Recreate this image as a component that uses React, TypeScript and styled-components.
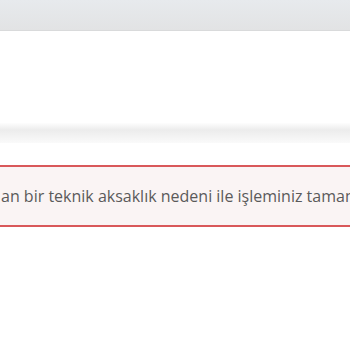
import React from 'react'
import styled, { createGlobalStyle } from 'styled-components'

const Global = createGlobalStyle`
  html, body {
    margin: 0;
    padding: 0;
    background: #fff;
    font-family: "Open Sans", "Liberation Sans", sans-serif;
    overflow: hidden;
  }
`

export default function App() {
  return (
    <>
      <Global />
      <Page>
        <TopBar />
        <Content />
        <Divider />
        <Alert>
          <AlertText>an bir teknik aksaklık nedeni ile işleminiz tamamlanamamıştır.</AlertText>
        </Alert>
      </Page>
    </>
  )
}

const Page = styled.div`
  display: flex;
  flex-direction: column;
  width: 350px;
  height: 350px;
  overflow: hidden;
`

const TopBar = styled.div`
  height: 30px;
  background: linear-gradient(#e7eaed, #e2e3e4);
  border-bottom: 1px solid #d9dadb;
`

const Content = styled.div`
  height: 92px;
  background: #fff;
`

const Divider = styled.div`
  height: 20px;
  background: linear-gradient(#fdfdfd, #ececec 35%, #fafafa 100%);
  margin-bottom: 22px;
`

const Alert = styled.div`
  height: 58px;
  display: flex;
  align-items: center;
  background: #faf4f4;
  border-top: 2px solid #d9585a;
  border-bottom: 2px solid #d9585a;
`

const AlertText = styled.span`
  white-space: nowrap;
  font-size: 16px;
  color: #5a5a5a;
  padding-left: 1px;
`
